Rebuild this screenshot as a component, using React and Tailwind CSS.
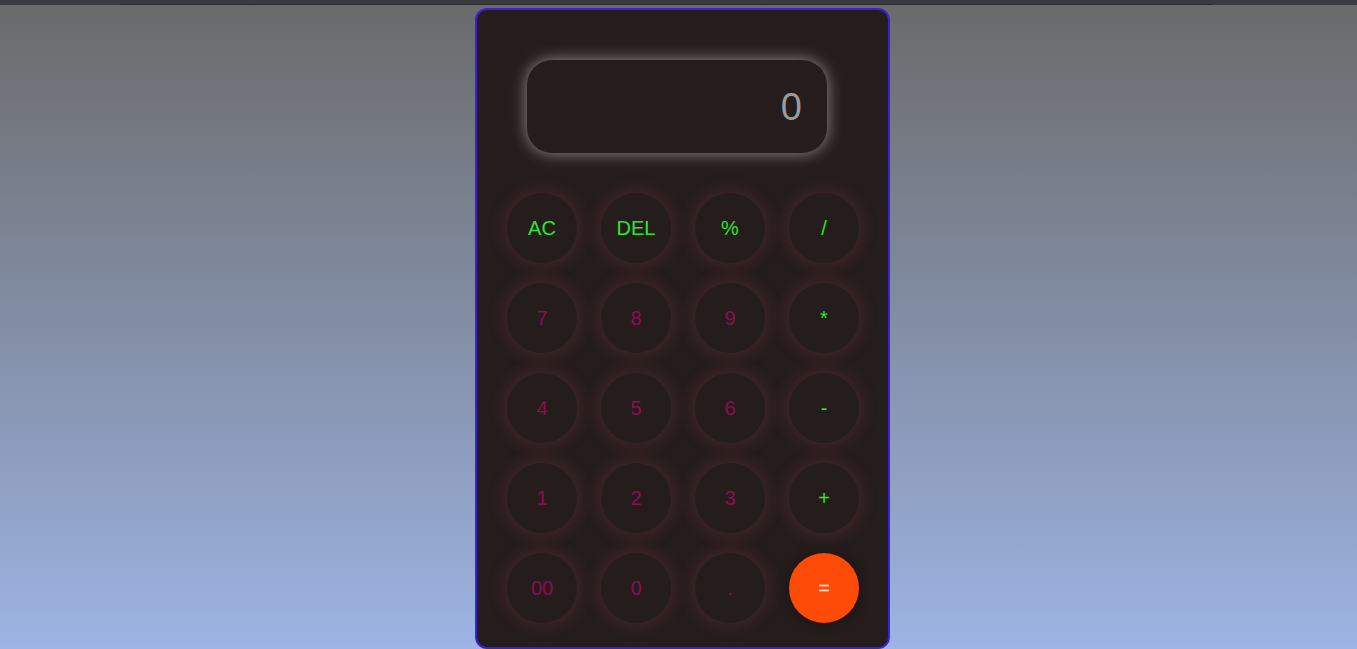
export default function App() {
  const keys = [
    { label: 'AC', kind: 'op' },
    { label: 'DEL', kind: 'op' },
    { label: '%', kind: 'op' },
    { label: '/', kind: 'op' },
    { label: '7', kind: 'num' },
    { label: '8', kind: 'num' },
    { label: '9', kind: 'num' },
    { label: '*', kind: 'op' },
    { label: '4', kind: 'num' },
    { label: '5', kind: 'num' },
    { label: '6', kind: 'num' },
    { label: '-', kind: 'op' },
    { label: '1', kind: 'num' },
    { label: '2', kind: 'num' },
    { label: '3', kind: 'num' },
    { label: '+', kind: 'op' },
    { label: '00', kind: 'num' },
    { label: '0', kind: 'num' },
    { label: '.', kind: 'num' },
    { label: '=', kind: 'eq' },
  ];

  return (
    <div className="h-[649px] overflow-hidden bg-gradient-to-b from-[#6a6a6a] to-[#9db4e4] font-['Liberation_Sans',Arial,sans-serif]">
      {/* browser-ish top strip */}
      <div className="h-[5px] bg-[#3a3b3f] flex items-end">
        <div className="ml-[120px] w-[1092px] h-px bg-[#28292c]"></div>
      </div>

      <div className="mt-[3px] ml-[475px] w-[415px] h-[641px] rounded-xl border-2 border-[#3b20d4] bg-[#251c1c]">
        {/* Display */}
        <div className="mt-[50px] ml-[50px] w-[300px] h-[93px] rounded-[25px] bg-[#251c1c] shadow-[0_0_16px_rgba(255,255,255,0.5)] flex items-center justify-end pr-[25px]">
          <span className="text-[38px] text-[#9b9b9b] leading-none">0</span>
        </div>

        {/* Keys */}
        <div className="mt-[40px] ml-[30px] w-[352px] grid grid-cols-4 gap-x-[24px] gap-y-[20px]">
          {keys.map((k) => (
            <button
              key={k.label}
              className={`w-[70px] h-[70px] rounded-full flex items-center justify-center text-[20px] ${
                k.kind === 'eq'
                  ? 'bg-[#ff4b08] text-[#f3e6e0] shadow-[0_0_14px_rgba(0,0,0,0.3)]'
                  : k.kind === 'op'
                  ? 'bg-[#251c1c] text-[#2ee52e] shadow-[0_0_20px_rgba(230,110,110,0.22)]'
                  : 'bg-[#251c1c] text-[#8b0f4f] shadow-[0_0_20px_rgba(230,110,110,0.22)]'
              }`}
            >
              {k.label}
            </button>
          ))}
        </div>
      </div>
    </div>
  );
}
